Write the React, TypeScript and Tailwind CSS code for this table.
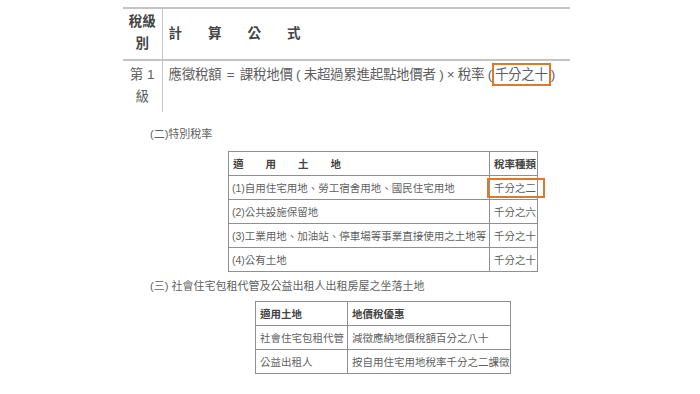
const font = 'font-["Liberation_Sans","Noto_Sans_CJK_TC",sans-serif]';

function OrangeBox({ children }: { children: React.ReactNode }) {
  return (
    <span className="inline-block border-2 border-[#e0782a] px-[1px] leading-[19px]">
      {children}
    </span>
  );
}

const specialRates = [
  { land: '(1)自用住宅用地、勞工宿舍用地、國民住宅用地', rate: '千分之二', marked: true },
  { land: '(2)公共設施保留地', rate: '千分之六' },
  { land: '(3)工業用地、加油站、停車場等事業直接使用之土地等', rate: '千分之十' },
  { land: '(4)公有土地', rate: '千分之十' },
];

const socialHousing = [
  { land: '社會住宅包租代管', benefit: '減徵應納地價稅額百分之八十' },
  { land: '公益出租人', benefit: '按自用住宅用地稅率千分之二課徵' },
];

export default function App() {
  return (
    <div className={`w-[700px] h-[394px] overflow-hidden bg-white text-[#5f5f5f] ${font}`}>
      {/* Formula table */}
      <table className="ml-[123px] mt-[7px] w-[447px] table-fixed border-collapse text-[13.5px] leading-[22px]">
        <colgroup>
          <col className="w-[39px]" />
          <col />
        </colgroup>
        <tbody>
          <tr className="border-t-2 border-b-2 border-[#c4c4c4]">
            <td className="border-r border-[#c4c4c4] pt-[2px] pb-[4px] text-center align-top font-bold text-[#444]">
              稅級
              <br />別
            </td>
            <td className="pl-[6px] align-middle font-bold text-[#444]">
              <div className="flex gap-[26px]">
                <span>計</span>
                <span>算</span>
                <span>公</span>
                <span>式</span>
              </div>
            </td>
          </tr>
          <tr>
            <td className="border-r border-[#c4c4c4] pt-[3px] pb-[4px] text-center align-top whitespace-nowrap">
              第 1
              <br />級
            </td>
            <td className="pl-[6px] pt-[2px] align-top whitespace-nowrap tracking-[-0.3px]">
              應徵稅額 <span className="px-[2px]">=</span> 課稅地價 ( 未超過累進起點地價者 ) × 稅率 (<OrangeBox>千分之十</OrangeBox>)
            </td>
          </tr>
        </tbody>
      </table>

      {/* Special rates */}
      <p className="ml-[150px] mt-[14px] text-[11px] leading-[16px]">(二)特別稅率</p>
      <table className="ml-[228px] mt-[9px] w-[310px] table-fixed border-collapse text-[10.5px] leading-[16px]">
        <colgroup>
          <col className="w-[261px]" />
          <col />
        </colgroup>
        <thead>
          <tr className="h-[24px]">
            <th className="border border-[#8f8f8f] pl-[4px] text-left font-bold text-[#444]">
              <div className="flex gap-[22px]">
                <span>適</span>
                <span>用</span>
                <span>土</span>
                <span>地</span>
              </div>
            </th>
            <th className="border border-[#8f8f8f] pl-[4px] text-left font-bold text-[#444] whitespace-nowrap">稅率種類</th>
          </tr>
        </thead>
        <tbody>
          {specialRates.map((r) => (
            <tr key={r.land} className="h-[24px]">
              <td className="border border-[#8f8f8f] pl-[3px] whitespace-nowrap">{r.land}</td>
              <td className="relative border border-[#8f8f8f] pl-[4px] whitespace-nowrap">
                {r.rate}
                {r.marked && (
                  <span className="absolute left-[-3px] right-[-8px] top-[2px] bottom-[1px] border-2 border-[#e0782a]" />
                )}
              </td>
            </tr>
          ))}
        </tbody>
      </table>

      {/* Social housing */}
      <p className="ml-[150px] mt-[6px] text-[11px] leading-[16px]">(三) 社會住宅包租代管及公益出租人出租房屋之坐落土地</p>
      <table className="ml-[255px] mt-[7px] w-[256px] table-fixed border-collapse text-[10.5px] leading-[16px]">
        <colgroup>
          <col className="w-[92px]" />
          <col />
        </colgroup>
        <thead>
          <tr className="h-[24px]">
            <th className="border border-[#8f8f8f] pl-[4px] text-left font-bold text-[#444]">適用土地</th>
            <th className="border border-[#8f8f8f] pl-[4px] text-left font-bold text-[#444]">地價稅優惠</th>
          </tr>
        </thead>
        <tbody>
          {socialHousing.map((r) => (
            <tr key={r.land} className="h-[24px]">
              <td className="border border-[#8f8f8f] pl-[4px] whitespace-nowrap">{r.land}</td>
              <td className="border border-[#8f8f8f] pl-[4px] whitespace-nowrap">{r.benefit}</td>
            </tr>
          ))}
        </tbody>
      </table>
    </div>
  );
}
